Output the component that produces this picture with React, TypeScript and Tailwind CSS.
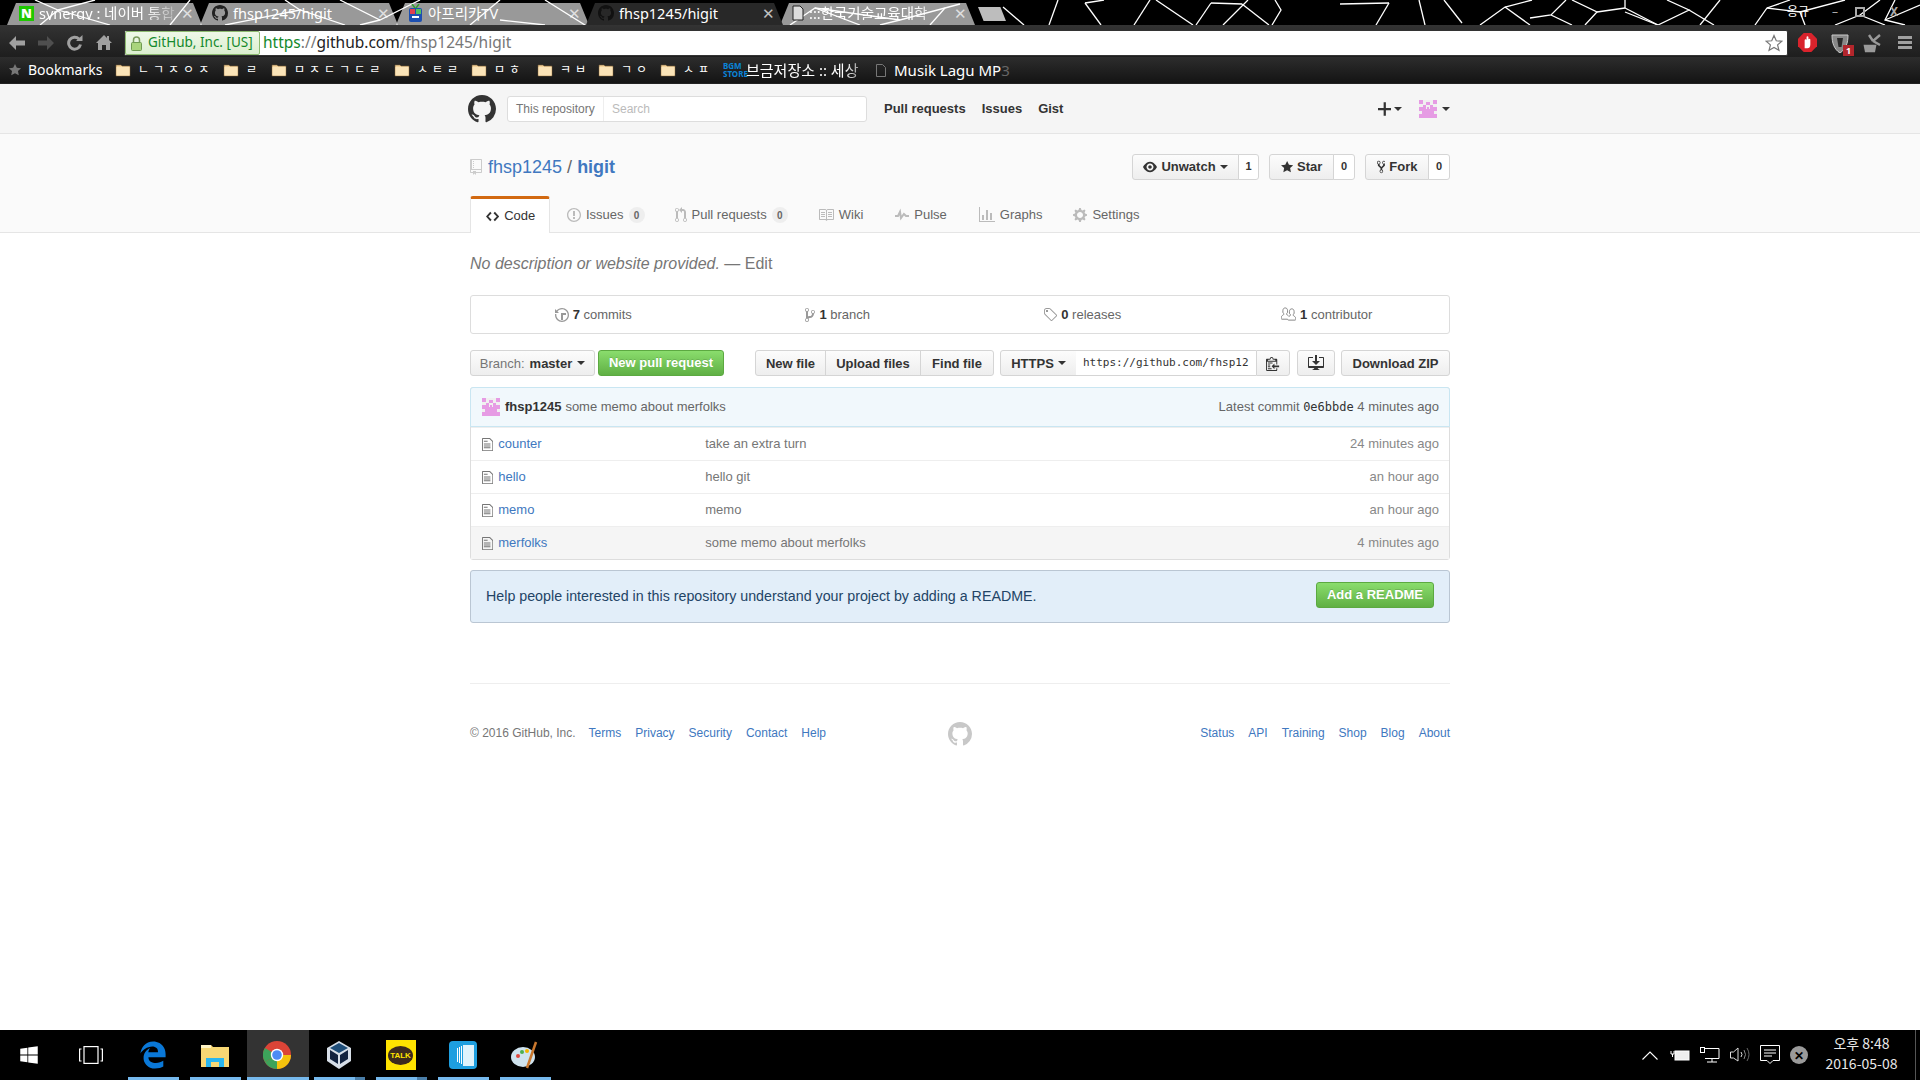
import React from 'react';
import { FaWindows } from 'react-icons/fa';
import { FaEdgeLegacy } from 'react-icons/fa6';

// octicons, as github drew them at the time
const ICONS: Record<string, [number, string]> = {
  mark: [16, 'M8 0C3.58 0 0 3.58 0 8c0 3.54 2.29 6.53 5.47 7.59.4.07.55-.17.55-.38 0-.19-.01-.82-.01-1.49-2.01.37-2.53-.49-2.69-.94-.09-.23-.48-.94-.82-1.13-.28-.15-.68-.52-.01-.53.63-.01 1.08.58 1.23.82.72 1.21 1.87.87 2.33.66.07-.52.28-.87.51-1.07-1.78-.2-3.64-.89-3.64-3.95 0-.87.31-1.59.82-2.15-.08-.2-.36-1.02.08-2.12 0 0 .67-.21 2.2.82.64-.18 1.32-.27 2-.27.68 0 1.36.09 2 .27 1.53-1.04 2.2-.82 2.2-.82.44 1.1.16 1.92.08 2.12.51.56.82 1.27.82 2.15 0 3.07-1.87 3.75-3.65 3.95.29.25.54.73.54 1.48 0 1.07-.01 1.93-.01 2.2 0 .21.15.46.55.38A8.013 8.013 0 0016 8c0-4.42-3.58-8-8-8z'],
  repo: [12, 'M4 9H3V8h1v1zm0-3H3v1h1V6zm0-2H3v1h1V4zm0-2H3v1h1V2zm8-1v12c0 .55-.45 1-1 1H6v2l-1.5-1.5L3 16v-2H1c-.55 0-1-.45-1-1V1c0-.55.45-1 1-1h10c.55 0 1 .45 1 1zm-1 10H1v2h2v-1h3v1h5v-2zm0-10H2v9h9V1z'],
  code: [14, 'M9.5 3L8 4.5 11.5 8 8 11.5 9.5 13 14 8 9.5 3zm-5 0L0 8l4.5 5L6 11.5 2.5 8 6 4.5 4.5 3z'],
  issue: [14, 'M7 2.3c3.14 0 5.7 2.56 5.7 5.7s-2.56 5.7-5.7 5.7A5.71 5.71 0 0 1 1.3 8c0-3.14 2.56-5.7 5.7-5.7zM7 1C3.14 1 0 4.14 0 8s3.14 7 7 7 7-3.14 7-7-3.14-7-7-7zm1 3H6v5h2V4zm0 6H6v2h2v-2z'],
  pr: [12, 'M11 11.28V5c-.03-.78-.34-1.47-.94-2.06C9.46 2.35 8.78 2.03 8 2H7V0L4 3l3 3V4h1c.27.02.48.11.69.31.21.2.3.42.31.69v6.28A1.993 1.993 0 0 0 10 15a1.993 1.993 0 0 0 1-3.72zm-1 2.92c-.66 0-1.2-.55-1.2-1.2 0-.65.55-1.2 1.2-1.2.65 0 1.2.55 1.2 1.2 0 .65-.55 1.2-1.2 1.2zM4 3c0-1.11-.89-2-2-2a1.993 1.993 0 0 0-1 3.72v6.56A1.993 1.993 0 0 0 2 15a1.993 1.993 0 0 0 1-3.72V4.72c.59-.34 1-.98 1-1.72zm-.8 10c0 .66-.55 1.2-1.2 1.2-.65 0-1.2-.55-1.2-1.2 0-.65.55-1.2 1.2-1.2.65 0 1.2.55 1.2 1.2zM2 4.2C1.34 4.2.8 3.65.8 3c0-.65.55-1.2 1.2-1.2.65 0 1.2.55 1.2 1.2 0 .65-.55 1.2-1.2 1.2z'],
  book: [16, 'M3 5h4v1H3V5zm0 3h4V7H3v1zm0 2h4V9H3v1zm11-5h-4v1h4V5zm0 2h-4v1h4V7zm0 2h-4v1h4V9zm2-6v9c0 .55-.45 1-1 1H9.5l-1 1-1-1H2c-.55 0-1-.45-1-1V3c0-.55.45-1 1-1h5.5l1 1 1-1H15c.55 0 1 .45 1 1zm-8 .5L7.5 3H2v9h6V3.5zm7-.5H9.5l-.5.5V12h6V3z'],
  pulse: [14, 'M11.5 8L8.8 5.4 6.6 8.5 5.5 1.6 2.38 8H0v2h3.6l.9-1.8.9 5.4L9 8.5l1.6 1.5H14V8z'],
  graph: [16, 'M16 14v1H0V0h1v14h15zM5 13H3V8h2v5zm4 0H7V3h2v10zm4 0h-2V6h2v7z'],
  gear: [14, 'M14 8.77v-1.6l-1.94-.64-.45-1.09.88-1.84-1.13-1.13-1.81.91-1.09-.45-.69-1.92h-1.6l-.63 1.94-1.11.45-1.84-.88-1.13 1.13.91 1.81-.45 1.09L0 7.23v1.59l1.94.64.45 1.09-.88 1.84 1.13 1.13 1.81-.91 1.09.45.69 1.92h1.59l.63-1.94 1.11-.45 1.84.88 1.13-1.13-.92-1.81.47-1.09L14 8.75v.02zM7 11c-1.66 0-3-1.34-3-3s1.34-3 3-3 3 1.34 3 3-1.34 3-3 3z'],
  eye: [16, 'M8.06 2C3 2 0 8 0 8s3 6 8.06 6C13 14 16 8 16 8s-3-6-7.94-6zM8 12c-2.2 0-4-1.78-4-4 0-2.2 1.8-4 4-4 2.22 0 4 1.8 4 4 0 2.22-1.78 4-4 4zm2-4c0 1.11-.89 2-2 2-1.11 0-2-.89-2-2 0-1.11.89-2 2-2 1.11 0 2 .89 2 2z'],
  star: [14, 'M14 6l-4.9-.64L7 1 4.9 5.36 0 6l3.6 3.26L2.67 14 7 11.67 11.33 14l-.93-4.74L14 6z'],
  fork: [10, 'M8 1a1.993 1.993 0 0 0-1 3.72V6L5 8 3 6V4.72A1.993 1.993 0 0 0 2 1a1.993 1.993 0 0 0-1 3.72V6.5l3 3v1.78A1.993 1.993 0 0 0 5 15a1.993 1.993 0 0 0 1-3.72V9.5l3-3V4.72A1.993 1.993 0 0 0 8 1zM2 4.2C1.34 4.2.8 3.65.8 3c0-.65.55-1.2 1.2-1.2.65 0 1.2.55 1.2 1.2 0 .65-.55 1.2-1.2 1.2zm3 10c-.66 0-1.2-.55-1.2-1.2 0-.65.55-1.2 1.2-1.2.65 0 1.2.55 1.2 1.2 0 .65-.55 1.2-1.2 1.2zm3-10c-.66 0-1.2-.55-1.2-1.2 0-.65.55-1.2 1.2-1.2.65 0 1.2.55 1.2 1.2 0 .65-.55 1.2-1.2 1.2z'],
  history: [14, 'M8 13H6V6h5v2H8v5zM7 1C4.81 1 2.87 2.02 1.59 3.59L0 2v4h4L2.5 4.5C3.55 3.17 5.17 2.3 7 2.3c3.14 0 5.7 2.56 5.7 5.7s-2.56 5.7-5.7 5.7A5.71 5.71 0 0 1 1.3 8c0-.34.03-.67.09-1H.08C.03 7.33 0 7.66 0 8c0 3.86 3.14 7 7 7s7-3.14 7-7-3.14-7-7-7z'],
  branch: [10, 'M10 5c0-1.11-.89-2-2-2a1.993 1.993 0 0 0-1 3.72v.3c-.02.52-.23.98-.63 1.38-.4.4-.86.61-1.38.63-.83.02-1.48.16-2 .45V4.72a1.993 1.993 0 0 0-1-3.72C.88 1 0 1.89 0 3a2 2 0 0 0 1 1.72v6.56c-.59.35-1 .99-1 1.72 0 1.11.89 2 2 2 1.11 0 2-.89 2-2 0-.53-.2-1-.53-1.36.09-.06.48-.41.59-.47.25-.11.56-.17.94-.17 1.05-.05 1.95-.45 2.75-1.25S8.95 7.77 9 6.73h-.02C9.59 6.37 10 5.73 10 5zM2 1.8c.66 0 1.2.55 1.2 1.2 0 .65-.55 1.2-1.2 1.2C1.35 4.2.8 3.65.8 3c0-.65.55-1.2 1.2-1.2zm0 12.41c-.66 0-1.2-.55-1.2-1.2 0-.65.55-1.2 1.2-1.2.65 0 1.2.55 1.2 1.2 0 .65-.55 1.2-1.2 1.2zm6-8c-.66 0-1.2-.55-1.2-1.2 0-.65.55-1.2 1.2-1.2.65 0 1.2.55 1.2 1.2 0 .65-.55 1.2-1.2 1.2z'],
  tag: [14, 'M7.73 1.73C7.26 1.26 6.62 1 5.96 1H3.5C2.13 1 1 2.13 1 3.5v2.47c0 .66.27 1.3.73 1.77l6.06 6.06c.39.39 1.02.39 1.41 0l4.59-4.59a.996.996 0 0 0 0-1.41L7.73 1.73zM2.38 7.09c-.31-.3-.47-.7-.47-1.13V3.5c0-.88.72-1.59 1.59-1.59h2.47c.42 0 .83.16 1.13.47l6.14 6.13-4.73 4.73-6.13-6.15zM3.01 3h2v2H3V3h.01z'],
  org: [16, 'M16 12.999c0 .439-.45 1-1 1H7.995c-.539 0-.994-.447-.995-.999H1c-.54 0-1-.561-1-1 0-2.634 3-4 3-4s.229-.409 0-1c-.841-.621-1.058-.59-1-3 .058-2.419 1.367-3 2.5-3s2.442.58 2.5 3c.058 2.41-.159 2.379-1 3-.229.59 0 1 0 1s1.549.711 2.42 2.088C9.196 9.369 10 8.999 10 8.999s.229-.409 0-1c-.841-.62-1.058-.59-1-3 .058-2.419 1.367-3 2.5-3s2.437.581 2.495 3c.059 2.41-.158 2.38-1 3-.229.59 0 1 0 1s3.005 1.366 3.005 4z'],
  file: [12, 'M6 5H2V4h4v1zM2 8h7V7H2v1zm0 2h7V9H2v1zm0 2h7v-1H2v1zm10-7.5V14c0 .55-.45 1-1 1H1c-.55 0-1-.45-1-1V2c0-.55.45-1 1-1h7.5L12 4.5zM11 5L8 2H1v12h10V5z'],
  clippy: [14, 'M2 13h4v1H2v-1zm5-6H2v1h5V7zm2 3V8l-3 3 3 3v-2h5v-2H9zM4.5 9H2v1h2.5V9zM2 12h2.5v-1H2v1zm9 1h1v2c-.02.28-.11.52-.3.7-.19.18-.42.28-.7.3H1c-.55 0-1-.45-1-1V4c0-.55.45-1 1-1h3c0-1.11.89-2 2-2 1.11 0 2 .89 2 2h3c.55 0 1 .45 1 1v5h-1V6H1v9h10v-2zM2 5h8c0-.55-.45-1-1-1H8c-.55 0-1-.45-1-1s-.45-1-1-1-1 .45-1 1-.45 1-1 1H3c-.55 0-1 .45-1 1z'],
  download: [16, 'M4 6h3V0h2v6h3l-4 4-4-4zm11-4h-4v1h4v8H1V3h4V2H1c-.55 0-1 .45-1 1v9c0 .55.45 1 1 1h5.34c-.25.61-.86 1.39-2.34 2h8c-1.48-.61-2.09-1.39-2.34-2H15c.55 0 1-.45 1-1V3c0-.55-.45-1-1-1z'],
  plus: [12, 'M12 9H7v5H5V9H0V7h5V2h2v5h5v2z'],
};

const Oct = ({ name, h = 16, className = 'fill-current' }: { name: string; h?: number; className?: string }) => {
  const [w, d] = ICONS[name];
  return (
    <svg viewBox={`0 0 ${w} 16`} width={(w * h) / 16} height={h} className={`shrink-0 ${className}`}>
      <path d={d} />
    </svg>
  );
};

const Caret = ({ className = 'border-t-[#333]' }: { className?: string }) => (
  <span className={`inline-block w-0 h-0 border-x-[4px] border-x-transparent border-t-[4px] ${className}`} />
);

const Identicon = ({ size }: { size: number }) => (
  <svg viewBox="0 0 18 18" width={size} height={size} className="shrink-0 bg-[#f0f0f0]">
    <path fill="#e69be4" d="M0 0h4v4H0zM14 0h4v4h-4zM7 2h4v3H7zM0 7h18v4H0zM4 5h3v3H4zM11 5h3v3h-3zM3 11h12v3H3zM0 14h18v4H0z" />
    <path fill="#f0f0f0" d="M7 7h1v2H7zM10 7h1v2h-1z" />
  </svg>
);

/* ---------- browser chrome ---------- */

const WALL = [
  '1058,0 1049,25', '1003,7 1024,25', '1085,3 1104,0', '1085,3 1101,25', '1150,0 1134,25', '1156,0 1193,25', '1211,3 1196,25',
  '1211,3 1242,4', '1248,0 1223,25', '1242,4 1269,25', '1275,0 1281,10 1272,25', '1340,4 1389,3', '1389,3 1376,25',
  '1419,0 1425,25', '1444,0 1462,23', '1480,25 1505,7 1532,0', '1505,7 1530,25', '1530,18 1551,15 1566,0', '1551,15 1572,25',
  '1572,0 1597,12 1585,25', '1597,12 1625,8', '1625,8 1658,25 1689,10 1667,0', '1625,0 1625,8', '1658,25 1625,12', '1689,10 1714,25',
  '1755,25 1767,8 1790,0', '1767,8 1800,12 1845,0', '1800,12 1805,25', '1835,25 1860,15 1880,0', '1860,15 1885,25', '1895,0 1885,20 1905,25',
  '1700,25 1720,0', '1920,5 1885,20',
  '35,0 58,10 95,0', '58,10 40,25', '58,10 110,25', '170,25 190,0', '225,25 300,10 345,25', '300,10 285,0', '340,0 380,20 420,0', '380,20 360,25',
  '470,25 500,0', '500,20 545,25', '545,0 585,25', '790,25 815,8 860,25', '815,8 900,20 960,4', '900,20 880,25', '930,25 945,8',
];

const FavNaver = () => (
  <span className="w-[15px] h-[15px] shrink-0 bg-[#1ec800] flex items-center justify-center text-white text-[13px] font-black leading-none">N</span>
);
const FavAfreeca = () => (
  <svg width="15" height="18" viewBox="0 0 15 18" className="shrink-0">
    <rect x="1" y="4" width="13" height="14" rx="2" fill="#1c4fb0" />
    <path d="M4 0l3 4M11 0L8 4" stroke="#30a030" strokeWidth="1.5" />
    <rect x="2" y="5" width="5" height="5" fill="#e04050" /><rect x="8" y="5" width="5" height="5" fill="#50c060" />
    <path d="M4 13h7" stroke="#fff" strokeWidth="2" />
  </svg>
);
const FavDoc = () => (
  <svg width="12" height="16" viewBox="0 0 12 16" className="shrink-0"><path d="M1 1h7l3 3v11H1z" fill="#ddd" stroke="#222" /></svg>
);

const ChromeTab = ({ w, title, icon, active, fade }: { w: string; title: string; icon: React.ReactNode; active?: boolean; fade?: boolean }) => (
  <div className={`${w} h-[22px] shrink-0 flex items-center gap-[5px] pl-[12px] pr-[8px] pb-[2px] text-white ${active ? 'bg-[#282828] z-10' : 'bg-white/60'} [clip-path:polygon(0_100%,9px_0,calc(100%-9px)_0,100%_100%)]`}>
    {icon}
    <span className={`flex-1 whitespace-nowrap text-[14.5px] leading-none ${fade ? '[mask-image:linear-gradient(90deg,#000_75%,rgba(0,0,0,0.25))]' : ''}`}>{title}</span>
    <span className={`text-[15px] leading-none ${active ? 'text-[#c0c0c0]' : 'text-white/70'}`}>✕</span>
  </div>
);

const Folder = () => (
  <svg width="16" height="14" viewBox="0 0 16 14" className="shrink-0">
    <path d="M1 2h5l1 1h8v10H1z" fill="#f5d39a" stroke="#6d5634" strokeWidth=".6" />
    <rect x="1.5" y="4" width="13" height="8.5" fill="#fbe4b8" />
  </svg>
);

const Bookmark = ({ label, w }: { label: string; w: string }) => (
  <div className={`${w} flex items-center gap-[7px] shrink-0`}>
    <Folder />
    <span className="text-[12px] tracking-[4px] leading-none text-white">{label}</span>
  </div>
);

const BrowserChrome = () => (
  <div className="shrink-0 bg-[#1c1c1c] [font-family:'Noto_Sans','Noto_Sans_CJK_KR',sans-serif]">
    {/* tab strip */}
    <div className="relative h-[25px] bg-black flex items-end pl-[7px] overflow-hidden">
      <svg className="absolute inset-0 pointer-events-none" width="1920" height="25" fill="none" stroke="#fff" strokeWidth="1.3">
        {WALL.map((p) => <polyline key={p} points={p} />)}
      </svg>
      <ChromeTab w="w-[195px]" title="synergy : 네이버 통합" icon={<FavNaver />} fade />
      <ChromeTab w="w-[198px] -ml-[2px]" title="fhsp1245/higit" icon={<Oct name="mark" className="fill-current text-[#222]" />} />
      <ChromeTab w="w-[193px] -ml-[2px]" title="아프리카TV" icon={<FavAfreeca />} />
      <ChromeTab w="w-[197px] -ml-[3px]" title="fhsp1245/higit" icon={<Oct name="mark" className="fill-current text-[#111]" />} active />
      <ChromeTab w="w-[195px] -ml-[3px]" title=":::한국기술교육대학" icon={<FavDoc />} fade />
      <div className="w-[28px] h-[14px] ml-[3px] mb-[4px] bg-[#bdbdbd] [clip-path:polygon(0_0,80%_0,100%_100%,20%_100%)]" />
      <div className="relative ml-auto mr-[5px] mb-[7px] flex items-center text-white text-[12px] leading-none">
        <span className="w-[38px] text-center">옹규</span>
        <span className="w-[24px] ml-[6px] text-center text-[#aaa]">–</span>
        <span className="w-[26px] flex justify-center"><span className="w-[10px] h-[10px] border-2 border-[#aaa]" /></span>
        <span className="w-[42px] text-center text-[#aaa] font-bold">X</span>
      </div>
    </div>
    {/* toolbar */}
    <div className="h-[32px] pt-[3px] flex items-center bg-gradient-to-b from-[#333] to-[#1e1e1e]">
      <div className="flex items-center w-[124px] pl-[9px] gap-[13px]">
        <svg width="16" height="14" viewBox="0 0 16 14"><path d="M7 0L0 7l7 7V9.5h9v-5H7z" fill="#a0a0a0" /></svg>
        <svg width="16" height="14" viewBox="0 0 16 14"><path d="M9 0l7 7-7 7V9.5H0v-5h9z" fill="#4f4f4f" /></svg>
        <svg width="16" height="16" viewBox="0 0 16 16"><path d="M13.5 9.5A6 6 0 1 1 12 4" fill="none" stroke="#a0a0a0" strokeWidth="3" /><path d="M9 6h6.5V0z" fill="#a0a0a0" /></svg>
        <svg width="16" height="15" viewBox="0 0 16 15"><path d="M8 0L0 8h2v7h4v-5h4v5h4V8h2l-3-3V1h-2v2z" fill="#a0a0a0" /></svg>
      </div>
      <div className="w-[1664px] h-[26px] shrink-0 mt-[1px] bg-white rounded-[2px] border border-[#333] flex items-center">
        <div className="h-[24px] w-[135px] shrink-0 flex items-center gap-[6px] pl-[5px] rounded-[2px] border border-[#8dbb70] bg-gradient-to-b from-[#eef8e8] to-[#dcefd0] text-[13.5px] text-[#14892c] leading-none whitespace-nowrap">
          <svg width="11" height="15" viewBox="0 0 11 15"><path d="M2.5 7V4a3 3 0 0 1 6 0v3" fill="none" stroke="#7a9a5e" strokeWidth="1.5" /><rect x=".5" y="6.5" width="10" height="8" rx="1" fill="#a9d47c" stroke="#6f9a52" /></svg>
          <span>GitHub, Inc. [US]</span>
        </div>
        <span className="ml-[3px] text-[15.5px] leading-none whitespace-nowrap text-[#777]">
          <span className="text-[#14892c]">https</span>://<span className="text-[#222]">github.com</span>/fhsp1245/higit
        </span>
        <svg width="18" height="18" viewBox="0 0 24 24" className="ml-auto mr-[4px]" fill="#fff" stroke="#777" strokeWidth="1.6"><path d="M12 2l3 7 7.5.6-5.7 4.9 1.8 7.3L12 18l-6.6 3.800 1.800-7.300L1.500 9.600 9 9z" /></svg>
      </div>
      <div className="flex-1 flex items-center pl-[10px] gap-[13px]">
        <svg width="19" height="19" viewBox="0 0 20 20" className="shrink-0">
          <path d="M6 0h8l6 6v8l-6 6H6l-6-6V6z" fill="#d9232c" />
          <path d="M7 16V7.500a1 1 0 0 1 2 0V4.500a1 1 0 0 1 2 0V7a1 1 0 0 1 2 0v5c0 3-1.500 4-3 4z" fill="#fff" />
        </svg>
        <div className="relative w-[18px] h-[20px] shrink-0 ml-[1px]">
          <svg width="18" height="20" viewBox="0 0 18 20"><path d="M1 2h16c0 8-2 14-8 18C3 16 1 10 1 2z" fill="#888" stroke="#ccc" /><path d="M6 5h6l-1.500 9h-3z" fill="#2a2a2a" /></svg>
          <span className="absolute -right-[5px] -bottom-[3px] w-[11px] h-[11px] bg-[#b3262c] text-white text-[9px] font-bold leading-[11px] text-center">1</span>
        </div>
        <svg width="20" height="20" viewBox="0 0 20 20" className="shrink-0 ml-[1px]"><path d="M3 18h8l1-5H2zM10 8l7-6M10 8l7 4M10 8L6 2" stroke="#9a9a9a" strokeWidth="2.400" fill="#9a9a9a" /></svg>
        <div className="flex flex-col gap-[2px] ml-[2px] w-[14px]">
          <span className="h-[3px] bg-[#a0a0a0]" /><span className="h-[3px] bg-[#a0a0a0]" /><span className="h-[3px] bg-[#a0a0a0]" />
        </div>
      </div>
    </div>
    {/* bookmarks */}
    <div className="h-[27px] flex items-center pl-[8px] bg-gradient-to-b from-[#2d2d2d] to-[#141414] text-white border-b border-[#222]">
      <svg width="14" height="14" viewBox="0 0 14 16" className="mr-[6px] text-[#777] fill-current"><path d={ICONS.star[1]} /></svg>
      <span className="text-[14px] leading-none w-[87px] shrink-0">Bookmarks</span>
      <Bookmark label="ㄴㄱㅈㅇㅈ" w="w-[108px]" />
      <Bookmark label="ㄹ" w="w-[48px]" />
      <Bookmark label="ㅁㅈㄷㄱㄷㄹ" w="w-[123px]" />
      <Bookmark label="ㅅㅌㄹ" w="w-[77px]" />
      <Bookmark label="ㅁㅎ" w="w-[66px]" />
      <Bookmark label="ㅋㅂ" w="w-[61px]" />
      <Bookmark label="ㄱㅇ" w="w-[62px]" />
      <Bookmark label="ㅅㅍ" w="w-[63px]" />
      <span className="w-[17px] mr-[6px] text-[#0a84d8] text-[8px] font-bold leading-[8px] text-center shrink-0">BGM<br />STORE</span>
      <span className="w-[124px] whitespace-nowrap text-[15px] leading-none [mask-image:linear-gradient(90deg,#000_80%,rgba(0,0,0,0.15))]">브금저장소 :: 세상</span>
      <span className="w-[18px] ml-[6px] shrink-0 flex"><svg width="10" height="13" viewBox="0 0 10 13"><path d="M.5.5h6l3 3v9h-9z" fill="none" stroke="#777" /></svg></span>
      <span className="text-[15px] leading-none whitespace-nowrap text-white">Musik Lagu MP<span className="text-[#666]">3</span></span>
    </div>
  </div>
);

/* ---------- github page ---------- */

const BTN = 'h-[26px] flex items-center justify-center border border-[#d5d5d5] bg-gradient-to-b from-[#fcfcfc] to-[#eeeeee] text-[13px] font-bold text-[#333] leading-none whitespace-nowrap';

const ActionBtn = ({ w, icon, label, count, caret, total }: { w: string; icon: string; label: string; count: string; caret?: boolean; total: string }) => (
  <div className={`flex ${total}`}>
    <div className={`${BTN} ${w} gap-[4px] rounded-l-[3px]`}>
      <Oct name={icon} h={14} />
      <span>{label}</span>
      {caret && <Caret />}
    </div>
    <div className="flex-1 h-[26px] -ml-px border border-[#d5d5d5] bg-white rounded-r-[3px] flex items-center justify-center text-[11px] font-bold text-[#333]">{count}</div>
  </div>
);

const RepoTab = ({ icon, label, count, active, h = 16, shift = '' }: { icon: string; label: string; count?: string; active?: boolean; h?: number; shift?: string }) => (
  <div
    className={
      active
        ? 'h-[37px] -mb-px flex items-center gap-[5px] w-[80px] pl-[15px] bg-white text-[#333] border-x border-[#e5e5e5] border-t-[3px] border-t-[#d26911] rounded-t-[3px] text-[13px]'
        : `h-[36px] flex items-center gap-[5px] px-[15px] pt-[2px] text-[#666] text-[13px] ${shift}`
    }
  >
    <Oct name={icon} h={h} className={active ? 'fill-current' : 'fill-current text-[#bbb]'} />
    <span>{label}</span>
    {count && <span className="w-[16px] h-[16px] rounded-full bg-[#eee] text-[#666] text-[10px] font-bold flex items-center justify-center">{count}</span>}
  </div>
);

const SummaryItem = ({ icon, n, label, outline }: { icon: string; n: string; label: string; outline?: boolean }) => (
  <div className="flex-1 flex items-center justify-center gap-[4px] text-[13px] text-[#666]">
    <Oct name={icon} h={outline ? 15 : 16} className={outline ? 'fill-none stroke-[#808080] stroke-[1]' : 'fill-current text-[#999]'} />
    <span><b className="text-[#333]">{n}</b> {label}</span>
  </div>
);

const FILES = [
  { name: 'counter', msg: 'take an extra turn', age: '24 minutes ago' },
  { name: 'hello', msg: 'hello git', age: 'an hour ago' },
  { name: 'memo', msg: 'memo', age: 'an hour ago' },
  { name: 'merfolks', msg: 'some memo about merfolks', age: '4 minutes ago', hover: true },
];

const GitHubPage = () => (
  <div className="flex-1 bg-white text-[13px] text-[#333] [font-family:'Liberation_Sans',Arial,sans-serif]">
    <header className="h-[50px] bg-[#f5f5f5] border-b border-[#e5e5e5]">
      <div className="w-[980px] mx-auto h-full flex items-center">
        <Oct name="mark" h={28} className="fill-current -ml-[2px] text-[#333]" />
        <div className="ml-[11px] w-[360px] h-[26px] bg-white border border-[#ddd] rounded-[3px] flex items-center text-[12px]">
          <span className="w-[96px] h-full flex items-center pl-[8px] border-r border-[#eee] text-[#767676]">This repository</span>
          <span className="pl-[8px] text-[#bbb]">Search</span>
        </div>
        <nav className="ml-[17px] flex gap-[16px] font-bold">
          <span>Pull requests</span><span>Issues</span><span>Gist</span>
        </nav>
        <div className="ml-auto flex items-center">
          <Oct name="plus" h={18} className="fill-current text-[#333]" />
          <span className="ml-[3px] flex"><Caret /></span>
          <span className="ml-[17px]"><Identicon size={18} /></span>
          <span className="ml-[5px] flex"><Caret /></span>
        </div>
      </div>
    </header>

    <div className="h-[99px] bg-[#fafafa] border-b border-[#e5e5e5]">
      <div className="w-[980px] mx-auto h-full flex flex-col">
        <div className="h-[62px] flex items-center pt-[3px]">
          <Oct name="repo" h={16} className="fill-current text-[#ccc] mr-[6px]" />
          <div className="text-[18px] text-[#4078c0] leading-none">
            <span>fhsp1245</span> <span className="text-[#666]">/</span> <b>higit</b>
          </div>
          <div className="ml-auto flex items-center gap-[10px]">
            <ActionBtn total="w-[127px]" w="w-[107px]" icon="eye" label="Unwatch" count="1" caret />
            <ActionBtn total="w-[86px]" w="w-[65px]" icon="star" label="Star" count="0" />
            <ActionBtn total="w-[85px]" w="w-[64px]" icon="fork" label="Fork" count="0" />
          </div>
        </div>
        <div className="flex items-end flex-1">
          <RepoTab active icon="code" label="Code" h={15} />
          <RepoTab icon="issue" label="Issues" count="0" shift="ml-[2px]" />
          <RepoTab icon="pr" label="Pull requests" count="0" shift="ml-0" />
          <RepoTab icon="book" label="Wiki" shift="ml-0" />
          <RepoTab icon="pulse" label="Pulse" shift="ml-[2px]" />
          <RepoTab icon="graph" label="Graphs" shift="ml-[2px]" />
          <RepoTab icon="gear" label="Settings" shift="ml-[1px]" />
        </div>
      </div>
    </div>

    <main className="w-[980px] mx-auto">
      <p className="h-[62px] flex items-center text-[16px] text-[#767676] whitespace-pre">
        <i>No description or website provided.</i> — Edit
      </p>

      <div className="h-[39px] border border-[#ddd] rounded-[3px] flex items-center">
        <SummaryItem icon="history" n="7" label="commits" />
        <SummaryItem icon="branch" n="1" label="branch" />
        <SummaryItem icon="tag" n="0" label="releases" />
        <SummaryItem icon="org" n="1" label="contributor" outline />
      </div>

      <div className="mt-[16px] flex items-center">
        <div className={`${BTN} w-[125px] gap-[5px] rounded-[3px]`}>
          <span className="font-normal text-[#767676]">Branch:</span> master <Caret />
        </div>
        <div className="ml-[3px] w-[126px] h-[26px] flex items-center justify-center rounded-[3px] border border-[#5ca941] bg-gradient-to-b from-[#8add6d] to-[#60b044] text-white text-[13px] font-bold [text-shadow:0_-1px_0_rgba(0,0,0,0.15)]">New pull request</div>
        <div className="ml-[31px] flex">
          <div className={`${BTN} w-[71px] rounded-l-[3px]`}>New file</div>
          <div className={`${BTN} w-[96px] -ml-px`}>Upload files</div>
          <div className={`${BTN} w-[74px] -ml-px rounded-r-[3px]`}>Find file</div>
        </div>
        <div className="ml-[6px] flex">
          <div className={`${BTN} w-[77px] gap-[4px] rounded-l-[3px]`}>HTTPS <Caret /></div>
          <div className="w-[180px] h-[26px] -ml-px border-y border-[#d5d5d5] bg-white flex items-center pl-[7px] text-[11px] text-[#333] [font-family:'DejaVu_Sans_Mono',monospace] whitespace-nowrap">https://github.com/fhsp12</div>
          <div className={`${BTN} w-[34px] rounded-r-[3px]`}><Oct name="clippy" h={15} className="fill-current" /></div>
        </div>
        <div className={`${BTN} w-[38px] ml-[7px] rounded-[3px]`}><Oct name="download" h={16} className="fill-current" /></div>
        <div className={`${BTN} ml-auto w-[109px] rounded-[3px]`}>Download ZIP</div>
      </div>

      <div className="mt-[11px] border border-[#ddd] rounded-[3px]">
        <div className="h-[40px] -m-px mb-0 flex items-center pl-[11px] pr-[10px] bg-[#f1f8fc] border border-[#c9e6f2] rounded-t-[3px] text-[#666] text-[13px]">
          <Identicon size={18} />
          <b className="ml-[5px] text-[#333]">fhsp1245</b>
          <span className="ml-[4px]">some memo about merfolks</span>
          <span className="ml-auto">Latest commit <span className="text-[12px] text-[#333] [font-family:'DejaVu_Sans_Mono',monospace]">0e6bbde</span> 4 minutes ago</span>
        </div>
        {FILES.map((f) => (
          <div key={f.name} className={`h-[33px] pb-[1px] flex items-center pl-[11px] pr-[10px] text-[13px] border-t border-[#eee] first:border-t-0 ${f.hover ? 'bg-[#f5f5f5]' : ''}`}>
            <Oct name="file" h={15} className="fill-current text-[#767676] mt-[1px]" />
            <span className="ml-[5px] w-[207px] text-[#4078c0]">{f.name}</span>
            <span className="text-[#767676]">{f.msg}</span>
            <span className="ml-auto text-[#888]">{f.age}</span>
          </div>
        ))}
      </div>

      <div className="mt-[10px] h-[53px] flex items-center justify-between pl-[15px] pr-[15px] bg-[#e2eef9] border border-[#bac6d3] rounded-[3px] text-[#246]">
        <span className="text-[14.25px]">Help people interested in this repository understand your project by adding a README.</span>
        <div className="w-[118px] h-[26px] -mt-[3px] flex items-center justify-center rounded-[3px] border border-[#5ca941] bg-gradient-to-b from-[#8add6d] to-[#60b044] text-white text-[13px] font-bold [text-shadow:0_-1px_0_rgba(0,0,0,0.15)]">Add a README</div>
      </div>

      <footer className="mt-[60px] border-t border-[#eee] h-[98px] flex items-center text-[12px] text-[#767676] relative">
        <span>© 2016 GitHub, Inc.</span>
        <div className="ml-[13px] flex gap-[14px] text-[#4078c0]">
          <span>Terms</span><span>Privacy</span><span>Security</span><span>Contact</span><span>Help</span>
        </div>
        <Oct name="mark" h={24} className="fill-current absolute left-[478px] top-[38px] text-[#c8c8c8]" />
        <div className="ml-auto flex gap-[14px] text-[#4078c0]">
          <span>Status</span><span>API</span><span>Training</span><span>Shop</span><span>Blog</span><span>About</span>
        </div>
      </footer>
    </main>
  </div>
);

/* ---------- windows taskbar ---------- */

const Slot = ({ children, on, active, split, w = 'w-[62px]' }: { children: React.ReactNode; on?: boolean; active?: boolean; split?: boolean; w?: string }) => (
  <div className={`relative ${w} pr-[3px] h-full flex items-center justify-center ${active ? 'bg-[#333]' : ''}`}>
    {children}
    {on && <span className={`absolute bottom-0 h-[3px] bg-[#76b9ed] ${active ? 'left-0 right-0' : 'left-[5px] right-[6px]'}`} />}
    {split && <span className="absolute bottom-0 right-[6px] w-[10px] h-[3px] bg-[#4a7ea8]" />}
  </div>
);

const Taskbar = () => (
  <div className="h-[50px] shrink-0 bg-black flex items-center text-white [font-family:'Noto_Sans_CJK_KR','Noto_Sans',sans-serif]">
    <Slot w="w-[61px]"><FaWindows size={20} className="text-white" /></Slot>
    <Slot w="w-[62px]">
      <svg width="24" height="18" viewBox="0 0 24 18" fill="none" stroke="#fff" strokeWidth="1.200"><rect x="5" y=".6" width="14" height="16.800" /><path d="M2.500 3H.6v12h1.900M21.500 3h1.900v12h-1.900" /></svg>
    </Slot>
    <Slot on><FaEdgeLegacy size={28} className="text-[#0a78d7]" /></Slot>
    <Slot on>
      <svg width="28" height="24" viewBox="0 0 28 24">
        <path d="M0 2h10l2 2h16v20H0z" fill="#f7d774" />
        <path d="M0 2h10v3H0z" fill="#fff3c4" />
        <path d="M5 24v-9h18v9h-5v-5h-8v5z" fill="#29b6f0" />
      </svg>
    </Slot>
    <Slot on active>
      <svg width="28" height="28" viewBox="0 0 28 28">
        <circle cx="14" cy="14" r="14" fill="#db4437" />
        <path d="M14 14L1.900 21A14 14 0 0 1 1.900 7z" fill="#3da35a" />
        <path d="M14 14L14 28A14 14 0 0 1 1.900 21z" fill="#3da35a" />
        <path d="M14 14h14A14 14 0 0 1 14 28z" fill="#f4c20d" />
        <circle cx="14" cy="14" r="6.200" fill="#fff" /><circle cx="14" cy="14" r="4.800" fill="#4c8bf5" />
      </svg>
    </Slot>
    <Slot on split>
      <svg width="26" height="30" viewBox="0 0 26 30">
        <path d="M13 1l12 7v13l-12 8-12-8V8z" fill="#d7dfe8" />
        <path d="M13 3l9 5-9 5-9-5z" fill="#1f4e79" />
        <path d="M4 10l8 5v9l-8-5zM22 10l-8 5v9l8-5z" fill="#12233f" />
      </svg>
    </Slot>
    <Slot on split>
      <div className="w-[30px] h-[30px] bg-[#ffe300] flex items-center justify-center">
        <span className="w-[25px] h-[19px] rounded-[50%] bg-[#3c2a1e] text-[#ffe300] text-[8px] font-bold leading-[19px] text-center [font-family:'Liberation_Sans',sans-serif]">TALK</span>
      </div>
    </Slot>
    <Slot on>
      <div className="w-[28px] h-[28px] rounded-[4px] bg-[#1e9fe0] flex items-center justify-end gap-[1px] pr-[3px]">
        <span className="w-[1px] h-[14px] bg-white" /><span className="w-[1px] h-[16px] bg-white" /><span className="w-[1px] h-[18px] bg-white" />
        <span className="w-[11px] h-[21px] bg-[#dff3fc]" />
      </div>
    </Slot>
    <Slot on>
      <svg width="28" height="30" viewBox="0 0 28 30">
        <ellipse cx="12" cy="17" rx="12" ry="10" fill="#cfe3ee" />
        <circle cx="7" cy="16" r="2" fill="#e0483e" /><circle cx="11" cy="12" r="2" fill="#4caf50" /><circle cx="16" cy="11" r="2" fill="#f4b400" />
        <path d="M25 2l-9 26" stroke="#c9772d" strokeWidth="2.500" />
      </svg>
    </Slot>

    <div className="ml-auto flex items-center h-full">
      <svg width="16" height="9" viewBox="0 0 16 9" fill="none" stroke="#fff" strokeWidth="1.100" className="mr-[12px]"><path d="M.5 8.500L8 1l7.500 7.500" /></svg>
      <svg width="20" height="11" viewBox="0 0 20 11" className="mr-[10px]"><path d="M1 1v3h3V1M2.500 4v3" stroke="#fff" fill="none" /><rect x="5" y="1" width="14" height="9" fill="#eee" stroke="#fff" /></svg>
      <svg width="20" height="16" viewBox="0 0 20 16" fill="none" stroke="#fff" className="mr-[10px]"><path d="M5 1.500h14v10H5M12 11.500v3.500M7 15h10" /><rect x=".5" y=".5" width="4" height="5" /></svg>
      <svg width="20" height="16" viewBox="0 0 20 16" fill="none" stroke="#ddd" className="mr-[10px]"><path d="M.5 5h3L8 1v13L3.500 11h-3z" /><path d="M11 5q2 2.500 0 5" /><path d="M14 3q3 4.500 0 9" stroke="#888" /><path d="M17 1q4 6.500 0 13" stroke="#666" /></svg>
      <svg width="20" height="20" viewBox="0 0 20 20" fill="none" stroke="#fff" className="mr-[10px]"><path d="M.5.5h19v15H13l-3 3-3-3H.5zM4 5h12M4 8h12M4 11h8" /></svg>
      <span className="w-[18px] h-[18px] rounded-full bg-[#9a9a9a] text-black flex items-center justify-center text-[12px] font-bold leading-none">✕</span>
      <div className="w-[107px] pb-[5px] text-center text-[14px] leading-[20px] text-[#e8e8e8]">
        <div>오후 8:48</div>
        <div>2016-05-08</div>
      </div>
      <span className="w-px h-full mr-[4px] bg-[#555]" />
    </div>
  </div>
);

export default function App() {
  return (
    <div className="w-[1920px] h-[1080px] flex flex-col overflow-hidden">
      <BrowserChrome />
      <GitHubPage />
      <Taskbar />
    </div>
  );
}
